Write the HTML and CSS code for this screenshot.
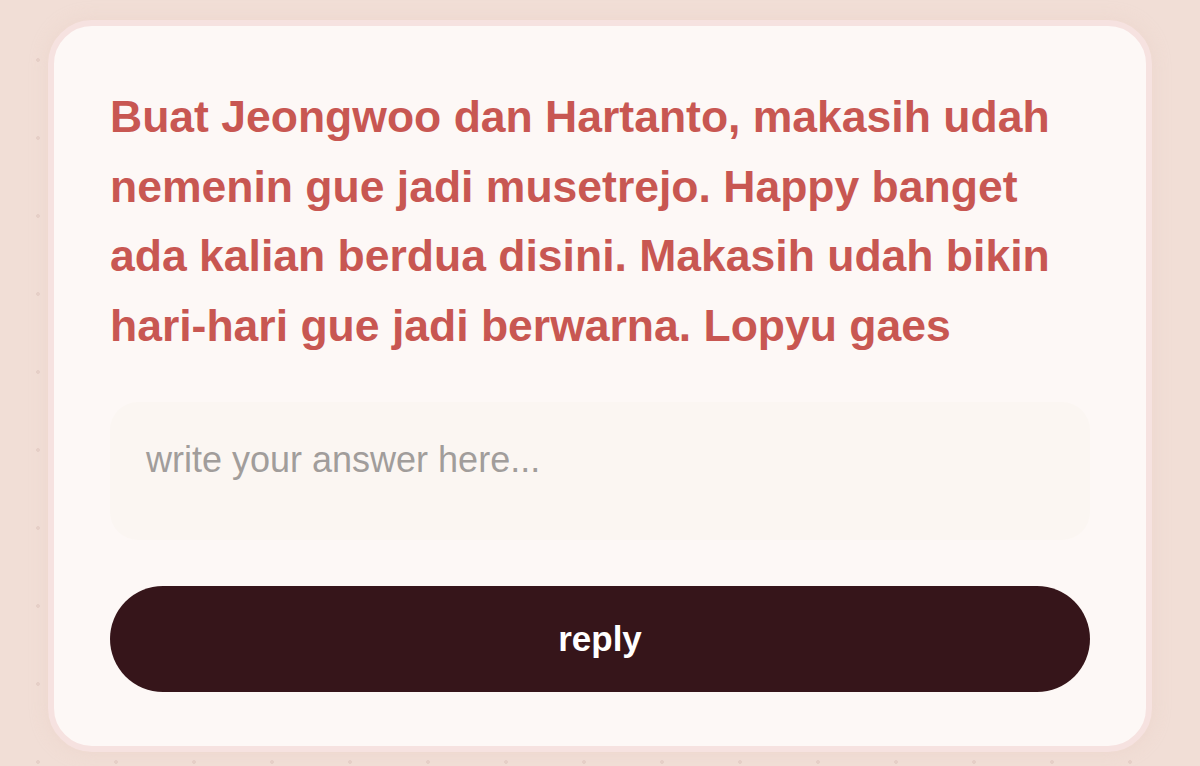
FILE: index.html
```html
<!DOCTYPE html>
<html lang="id">
<head>
  <meta charset="UTF-8">
  <meta name="viewport" content="width=device-width, initial-scale=1.0">
  <title>Reply</title>
  <link rel="stylesheet" href="styles.css">
</head>
<body>
  <div class="card">
    <p class="message">Buat Jeongwoo dan Hartanto, makasih udah nemenin gue jadi musetrejo. Happy banget ada kalian berdua disini. Makasih udah bikin hari-hari gue jadi berwarna. Lopyu gaes</p>
    <textarea class="answer" placeholder="write your answer here..."></textarea>
    <button class="reply-btn">reply</button>
  </div>
</body>
</html>
```

FILE: styles.css
```css
body {
  margin: 0;
  padding: 20px 48px;
  font-family: "Liberation Sans", Arial, Helvetica, sans-serif;
  background-color: #f1ded6;
  background-image: radial-gradient(circle, #e6d0c8 1.6px, transparent 2.2px);
  background-size: 78px 78px;
  background-position: -1px 21px;
  min-height: 766px;
  box-sizing: border-box;
}
.card {
  background: #fdf8f6;
  border: 6px solid #f6e2e0;
  border-radius: 44px;
  padding: 56px 56px 54px;
  display: flex;
  flex-direction: column;
  box-shadow: 0 0 18px rgba(230, 200, 190, 0.35);
}
.message {
  margin: 0 0 42px;
  color: #c85752;
  font-size: 44.5px;
  font-weight: bold;
  line-height: 69.5px;
}
.answer {
  display: block;
  height: 138px;
  box-sizing: border-box;
  border: none;
  outline: none;
  resize: none;
  border-radius: 28px;
  background: #fbf6f2;
  padding: 36px;
  font-family: inherit;
  font-size: 36px;
  line-height: 44px;
  color: #333;
  margin-bottom: 46px;
}
.answer::placeholder {
  color: #a19d9b;
}
.reply-btn {
  height: 106px;
  border: none;
  border-radius: 53px;
  background: #36151a;
  color: #fff;
  font-family: inherit;
  font-size: 35px;
  font-weight: bold;
  cursor: pointer;
}
```
